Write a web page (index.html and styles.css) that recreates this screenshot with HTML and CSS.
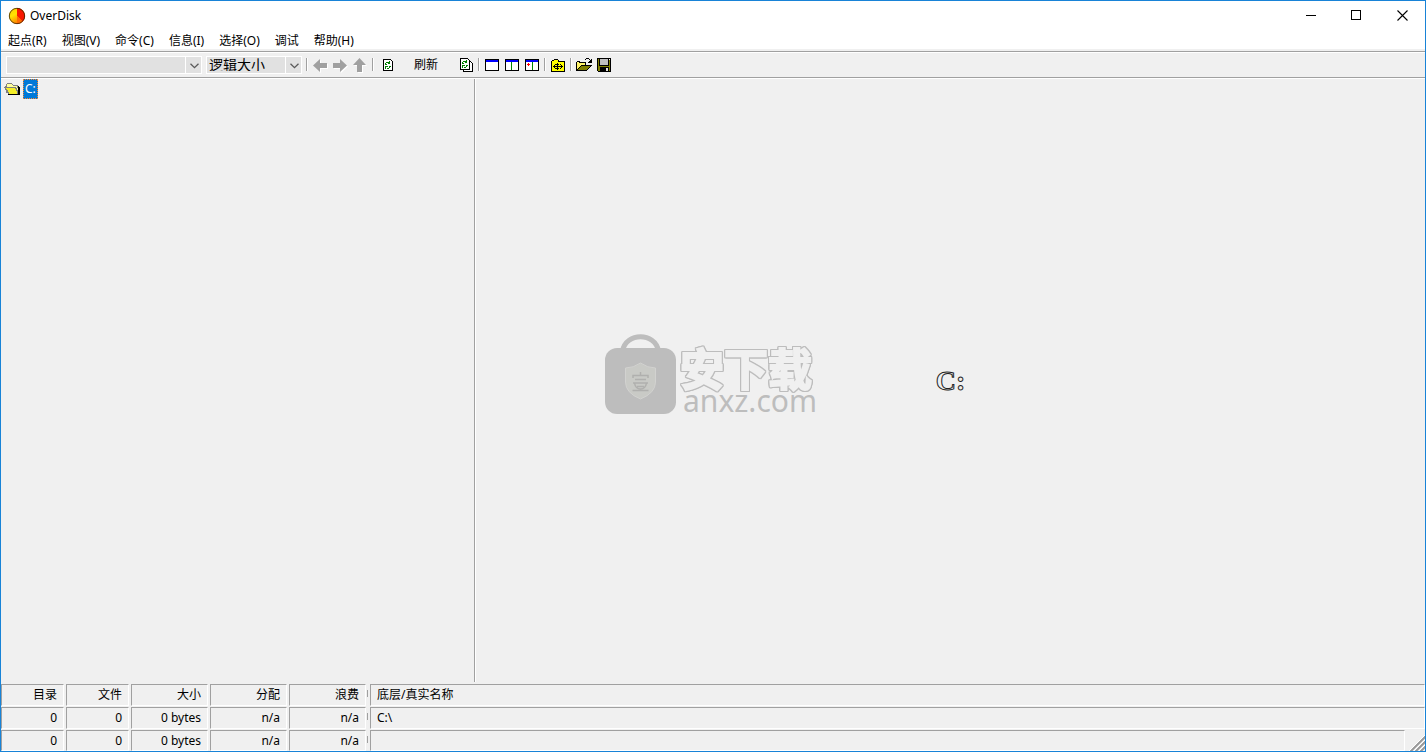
FILE: index.html
```html
<!DOCTYPE html>
<html lang="zh-CN">
<head>
<meta charset="utf-8">
<title>OverDisk</title>
<link rel="stylesheet" href="styles.css">
</head>
<body>
<div class="window">
  <header class="titlebar">
    <svg class="app-icon" width="18" height="18" viewBox="0 0 18 18" aria-hidden="true">
      <defs>
        <linearGradient id="pie" x1="0" y1="0" x2="0.6" y2="1"><stop offset="0" stop-color="#ffc800"/><stop offset=".45" stop-color="#ffe400"/><stop offset="1" stop-color="#ff6a00"/></linearGradient>
      </defs>
      <circle cx="9" cy="9" r="8" fill="url(#pie)"/>
      <path d="M9 9V1A8 8 0 0 1 14.6 14.6Z" fill="#f81800"/>
      <path d="M9 9L14.6 14.6A8 8 0 0 1 9 17Z" fill="#ff6a00"/>
      <circle cx="9" cy="9" r="7.7" fill="none" stroke="#3a2000" stroke-width=".8"/>
    </svg>
    <h1 class="title">OverDisk</h1>
    <div class="caption-buttons">
      <button class="caption" aria-label="最小化"><svg width="11" height="11" shape-rendering="crispEdges"><path d="M1 5h10v1H1z"/></svg></button>
      <button class="caption" aria-label="最大化"><svg width="11" height="11" shape-rendering="crispEdges"><path d="M.5 .5h9v9h-9z" fill="none" stroke="#000"/></svg></button>
      <button class="caption" aria-label="关闭"><svg width="11" height="11"><path d="M.5 .5l10 10M10.500 .5l-10 10" fill="none" stroke="#000" stroke-width="1.100"/></svg></button>
    </div>
  </header>

  <nav class="menubar">
    <button class="menu">起点(R)</button>
    <button class="menu">视图(V)</button>
    <button class="menu">命令(C)</button>
    <button class="menu">信息(I)</button>
    <button class="menu">选择(O)</button>
    <button class="menu">调试</button>
    <button class="menu">帮助(H)</button>
  </nav>

  <div class="toolbar" role="toolbar">
    <div class="combo combo-path">
      <select class="combo-select" aria-label="路径"><option></option></select>
      <svg class="chevron" width="9" height="6" viewBox="0 0 9 6"><path d="M.5 .7L4.500 4.700L8.500 .7" fill="none" stroke="#5a5a5a" stroke-width="1.300"/></svg>
    </div>
    <div class="combo combo-size">
      <select class="combo-select" aria-label="大小类型"><option>逻辑大小</option></select>
      <svg class="chevron" width="9" height="6" viewBox="0 0 9 6"><path d="M.5 .7L4.500 4.700L8.500 .7" fill="none" stroke="#5a5a5a" stroke-width="1.300"/></svg>
    </div>
    <span class="sep"></span>
    <button class="tool" aria-label="后退"><svg class="arrow" width="16" height="16"><path d="M1 8.500L8 2v4h7v5H8v4z"/></svg></button>
    <button class="tool" aria-label="前进"><svg class="arrow" width="16" height="16"><path d="M15 8.500L8 2v4H1v5h7v4z"/></svg></button>
    <button class="tool" aria-label="向上"><svg class="arrow" width="16" height="16"><path d="M7.500 1L14 8h-4v7H5V8H1z"/></svg></button>
    <span class="sep"></span>
    <button class="tool tool-wide">
      <svg width="16" height="16" shape-rendering="crispEdges">
        <path d="M3.500 2.500h7l2 2v9h-9z" fill="#fff" stroke="#000"/>
        <path d="M6 5h3v1H6zM5 6h1v1h1v1H5zM9 4h1v3H8V6h1zM5 9h3v1H6v2H5zM9 9h2v1h-1v1H9zM7 11h2v1H7z" fill="#008000"/>
      </svg>
      刷新
    </button>
    <button class="tool" aria-label="全部刷新">
      <svg width="16" height="16" shape-rendering="crispEdges">
        <path d="M5.500 4.500h7l2 2v8h-9z" fill="#fff" stroke="#000"/>
        <path d="M2.500 1.500h7l2 2v9h-9z" fill="#fff" stroke="#000"/>
        <path d="M5 4h3v1H5zM4 5h1v1h1v1H4zM8 3h1v3H7V5h1zM4 8h3v1H5v2H4zM8 8h2v1H9v1H8zM6 10h2v1H6z" fill="#008000"/>
      </svg>
    </button>
    <span class="sep"></span>
    <button class="tool" aria-label="单窗格"><svg width="16" height="16" shape-rendering="crispEdges"><path d="M1 2h14v12H1z"/><path d="M2 5h12v8H2z" fill="#fff"/><path d="M2 3h12v2H2z" fill="#00f"/></svg></button>
    <button class="tool" aria-label="双窗格"><svg width="16" height="16" shape-rendering="crispEdges"><path d="M1 2h14v12H1z"/><path d="M2 5h12v8H2z" fill="#fff"/><path d="M2 3h12v2H2z" fill="#00f"/><path d="M7 5h1v8H7z" fill="#008000"/></svg></button>
    <button class="tool" aria-label="详细窗格"><svg width="16" height="16" shape-rendering="crispEdges"><path d="M1 2h14v12H1z"/><path d="M2 5h12v8H2z" fill="#fff"/><path d="M2 3h12v2H2z" fill="#00f"/><path d="M8 5h1v8H8z" fill="#008000"/><path d="M4 6h1v1h1v1H5v1H4V8H3V7h1z" fill="red"/></svg></button>
    <span class="sep"></span>
    <button class="tool" aria-label="展开文件夹">
      <svg width="16" height="16" shape-rendering="crispEdges">
        <path d="M1.500 14.500v-10l1-1h1l1-1h3l1 1v1h6v10z" fill="#ff0" stroke="#000"/>
        <path d="M3 9h10v1H3zM7 6h1v7H7zM4 8h1v3H4zM11 8h1v3h-1zM6 7h3v1H6zM6 11h3v1H6zM5 7h1v1H5zM10 7h1v1h-1zM5 11h1v1H5zM10 11h1v1h-1z"/>
      </svg>
    </button>
    <span class="sep"></span>
    <button class="tool" aria-label="打开">
      <svg width="18" height="16" viewBox="0 0 18 16" shape-rendering="crispEdges">
        <path d="M1 13V5h1V4h3v1h6v3h-6z" fill="#fffb80"/>
        <path d="M1 5h1V4h3v1h6v3h-1V6H4V5H2v8H1zM6 8h11v1h-1v1h-1v1h-1v1h-1v1h-1v1H1v-1h1v-1h1v-1h1v-1h1V9h1z"/>
        <path d="M2 6h8v2H6v1H5v1H4v1H3v1H2z" fill="#fff46a"/>
        <path d="M6 9h9v1h-1v1h-1v1h-1v1H3v-1h1v-1h1v-1h1z" fill="#808000"/>
        <path d="M11 1h3v1h-3zM10 2h1v1h-1zM14 2h1v1h-1zM16 2h1v4h-4V5h1V4h1V3h1z"/>
      </svg>
    </button>
    <button class="tool" aria-label="保存">
      <svg width="16" height="16" shape-rendering="crispEdges">
        <path d="M1 1h14v14H2v-1H1z"/><path d="M2 2h12v12H2z" fill="#808000"/><path d="M3 2h10v7H3z"/><path d="M4 2h8v6H4z" fill="#c0c0c0"/><path d="M4 10h9v5H4z"/><path d="M10 11h2v3h-2z" fill="#e0e0e0"/><path d="M13 2h1v1h-1z" fill="#fff"/>
      </svg>
    </button>
  </div>

  <main class="panes">
    <section class="tree">
      <button class="node">
        <svg width="17" height="16" viewBox="0 0 17 16" shape-rendering="crispEdges">
          <path d="M3 2h5v1h1v1h5v3h1v7H4v-2H2V9H1V5h1V3h1z" fill="#808080"/>
          <path d="M3 3h5v1h1v1h4v2h1v5H4L2 6h1z" fill="#ffff9a"/>
          <path d="M0 6h12v1h1v2h1v4H4v-2H3V9H2V8H1V7H0z" fill="#808080"/>
          <path d="M2 7h9v1h1v2h1v3H5v-2H4V9H3V8H2z" fill="#f4ee28"/>
          <path d="M14 5h1v1h1v8H4v-1h10z"/>
        </svg>
        <span class="node-label">C:</span>
      </button>
    </section>
    <section class="chart"><span class="drive">C:</span></section>
  </main>

  <footer class="status">
    <table class="stats">
      <colgroup><col class="c-small"><col class="c-small"><col class="c-wide"><col class="c-wide"><col class="c-wide"><col class="c-tick"><col><col class="c-grip"></colgroup>
      <tr><th>目录</th><th>文件</th><th>大小</th><th>分配</th><th>浪费</th><td class="tick"></td><th class="name" colspan="2">底层/真实名称</th></tr>
      <tr><td>0</td><td>0</td><td>0 bytes</td><td>n/a</td><td>n/a</td><td class="tick"></td><td class="name" colspan="2">C:\</td></tr>
      <tr class="last"><td>0</td><td>0</td><td>0 bytes</td><td>n/a</td><td>n/a</td><td class="tick"></td><td class="name"></td><td class="grip"><svg width="16" height="16" viewBox="0 0 16 16"><path d="M1 17L17 1M6 17L17 6M11 17L17 11" stroke="#999" stroke-width="2" fill="none"/><path d="M-1 17L17 -1M4 17L17 4M9 17L17 9" stroke="#fff" stroke-width="1" fill="none"/></svg></td></tr>
    </table>
  </footer>

  <div class="watermark">
    <svg class="bag" width="71" height="80" viewBox="0 0 71 80" aria-hidden="true">
      <path d="M17.500 17C21 -2 50 -2 53.500 17" fill="none" stroke="#bdbdbd" stroke-width="5"/>
      <rect x="0" y="14" width="71" height="66" rx="12" fill="#bdbdbd"/>
      <path d="M35.500 29q7 5 15 5v14q0 11-15 17q-15-6-15-17V34q8 0 15-5z" fill="#c9cac6" stroke="#d2d2d0" stroke-width="1"/>
      <path d="M35.500 38v3M28 44v-2.500h15V44M30 45.500h11M28 49h15M29.500 49q1 6 6 6t6-6M32 52.500h7M27.500 56.500h16" fill="none" stroke="#b0b0ae" stroke-width="1.500"/>
    </svg>
    <div class="brand">
      <span class="brand-name">安下载</span>
      <span class="brand-site">anxz.com</span>
    </div>
  </div>
</div>
</body>
</html>
```
FILE: styles.css
```css
* { box-sizing: border-box; }
html, body { height: 100%; }
body {
  margin: 0;
  background: #f0f0f0;
  color: #000;
  font: 12px/18px "Noto Sans", "Noto Sans CJK SC", sans-serif;
}
button {
  border: 0;
  padding: 0;
  background: none;
  color: inherit;
  font: inherit;
}
svg { display: block; flex: none; }

.window {
  position: relative;
  display: flex;
  flex-direction: column;
  min-height: 100%;
  border: 1px solid #1883d7;
}

.titlebar {
  display: flex;
  align-items: center;
  height: 29px;
  padding-left: 7px;
  background: #fff;
}
.title { margin: 0 auto 0 4px; font-size: 12px; font-weight: 400; }
.caption-buttons { display: flex; align-self: stretch; }
.caption { display: grid; place-items: center; width: 46px; }

.menubar { display: flex; gap: 1px; height: 19px; background: #fff; }
.menu { padding: 0 7px; line-height: 22px; }

.toolbar {
  display: flex;
  align-items: center;
  height: 27px;
  margin-top: 2px;
  padding: 0 5px;
  border: solid #a0a0a0;
  border-width: 1px 0;
  box-shadow: inset 0 1px #fff, 0 1px #fff;
}
.combo {
  position: relative;
  height: 18px;
  border: 1px solid #fff;
  background: #e1e1e1;
}
.combo-path { width: 196px; margin-right: 4px; }
.combo-size { width: 96px; margin-right: 2px; }
.combo::after {
  content: "";
  position: absolute;
  top: 0;
  right: 15px;
  width: 1px;
  height: 100%;
  background: #fff;
}
.combo-select {
  display: block;
  width: 100%;
  height: 14px;
  padding: 0 16px 0 2px;
  border: 0;
  background: none;
  color: #000;
  font: 14px/14px "Noto Sans CJK SC", sans-serif;
  appearance: none;
}
.chevron { position: absolute; top: 6px; right: 2px; pointer-events: none; }
.sep {
  width: 2px;
  height: 13px;
  margin: 0 2px;
  border-left: 1px solid #a0a0a0;
  border-right: 1px solid #fff;
}
.tool {
  display: flex;
  align-items: center;
  justify-content: center;
  width: 20px;
  height: 22px;
}
.tool-wide { justify-content: flex-start; gap: 18px; width: 80px; padding-left: 4px; }
.arrow { fill: #a0a0a0; filter: drop-shadow(1px 1px 0 #fff); }

.panes { display: flex; flex: 1; padding-top: 1px; }
.tree { width: 33.3%; border-right: 1px solid #a0a0a0; }
.chart {
  display: flex;
  flex: 1;
  align-items: center;
  justify-content: center;
  border-left: 1px solid #fff;
}
.node { display: flex; align-items: center; gap: 2px; padding-left: 3px; }
.node-label {
  padding: 0 1px;
  border: 1px dotted #ff8728;
  background: #0078d7;
  color: #fff;
}
.drive {
  color: #f0f0f0;
  font: bold 28px/34px "Liberation Serif", serif;
  -webkit-text-stroke: 1px #222;
}

.status { overflow: hidden; padding-top: 1px; }
.stats {
  width: calc(100% + 4px);
  margin: 0 -2px -1px;
  border-spacing: 2px 1px;
  table-layout: fixed;
}
.c-small { width: 63px; }
.c-wide { width: 77px; }
.c-tick { width: 0; }
.c-grip { width: 18px; }
.stats th, .stats td {
  height: 22px;
  padding: 0 6px;
  border: 1px solid;
  border-color: #a0a0a0 #fff #fff #a0a0a0;
  font-weight: 400;
  line-height: 18px;
  text-align: right;
}
.stats .last td { height: 21px; }
.stats .name { text-align: left; }
.stats .tick { position: relative; padding: 0; border: 0; }
.tick::before {
  content: "";
  position: absolute;
  top: 6px;
  left: -1px;
  width: 1px;
  height: 7px;
  background: #a0a0a0;
}
.stats .grip { padding: 0; border: 0; vertical-align: bottom; }
.grip svg { margin-left: auto; }

.watermark {
  position: absolute;
  top: 50%;
  left: 50%;
  display: flex;
  gap: 4px;
  padding: 0 4px 4px 0;
  transform: translate(-50%, -50%);
  color: #bdbdbd;
  pointer-events: none;
}
.brand { display: flex; flex-direction: column; padding-top: 12px; }
.brand-name {
  color: #f0f0f0;
  font: bold 44px/42px "Noto Sans CJK SC", sans-serif;
  -webkit-text-stroke: 2px #f0f0f0;
  filter: drop-shadow(1px 0 #bdbdbd) drop-shadow(-1px 0 #bdbdbd) drop-shadow(0 1px #bdbdbd) drop-shadow(0 -1px #bdbdbd);
}
.brand-site { padding-left: 3px; font: 30px/26px "Noto Sans", sans-serif; }
```
